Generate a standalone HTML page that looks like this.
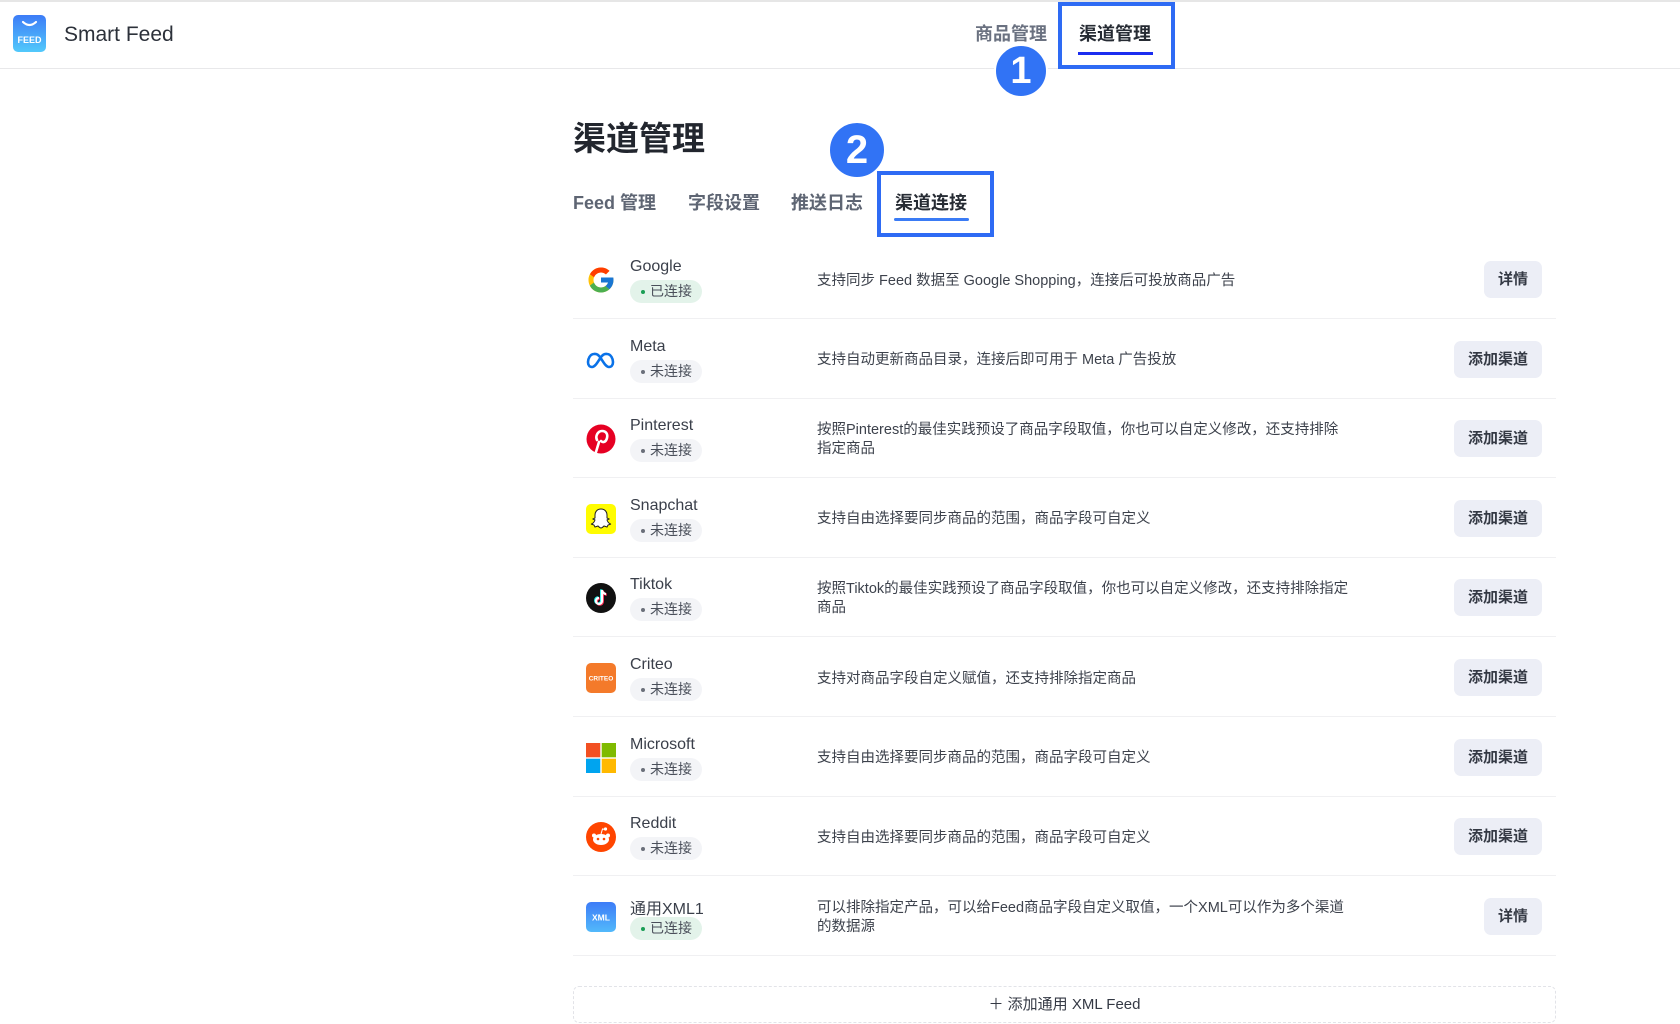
<!DOCTYPE html>
<html><head><meta charset="utf-8"><style>
*{box-sizing:border-box;margin:0;padding:0}
body{width:1680px;height:1024px;overflow:hidden;background:#fff;font-family:"Liberation Sans","Noto Sans CJK SC",sans-serif;color:#262b33;position:relative}
.hdr{position:absolute;left:0;top:0;width:1680px;height:69px;border-top:2px solid #e6e6e6;border-bottom:1px solid #e8e8ea}
.abs{position:absolute}
.row{position:absolute;left:573px;width:983px;height:80px;border-bottom:1px solid #f0f0f2}
.ic{position:absolute;left:13px;top:26px;width:30px;height:30px}
.nm{position:absolute;left:57px;top:19px;font-size:16px;color:#3a3f4a}
.bd{position:absolute;left:57px;top:41px;height:23px;width:72px;border-radius:12px;background:#f3f4f7;color:#4a4f5a;font-size:14px;line-height:23px;padding-left:20px}
.bd:before{content:"";position:absolute;left:11px;top:10px;width:4px;height:4px;border-radius:50%;background:#6a6f7a}
.bd.on{background:#e3f3ea}.bd.on:before{background:#1a9e55}
.ds{position:absolute;left:244px;top:2px;height:80px;width:535px;display:flex;align-items:center;font-size:14.5px;color:#3d424c;line-height:19px}
.bt{position:absolute;right:14px;top:22px;height:37px;padding:0 14px;background:#eceef6;border-radius:7px;font-size:15px;font-weight:bold;color:#343944;line-height:37px}
.circ{position:absolute;border-radius:50%;background:#3173f5;color:#fff;font-weight:bold;text-align:center;border:2px solid #fff}
.tab{position:absolute;top:189px;font-size:18px;font-weight:bold;color:#5e6573}
</style></head><body>
<div class="hdr"></div>
<svg class="abs" style="left:13px;top:15px" width="33" height="37" viewBox="0 0 33 37"><defs><linearGradient id="g" x1="0" y1="0" x2="0" y2="1"><stop offset="0" stop-color="#3d7cf7"/><stop offset="1" stop-color="#52c9fb"/></linearGradient></defs><rect x="0" y="0" width="33" height="37" rx="5" fill="url(#g)"/><path d="M10 7 Q16.5 13 23 7" stroke="#fff" stroke-width="2.2" fill="none" stroke-linecap="round"/><text x="16.5" y="28" font-size="9" font-weight="bold" fill="#fff" text-anchor="middle" font-family="Liberation Sans">FEED</text></svg>
<div class="abs" style="left:64px;top:23px;font-size:21px;color:#2c313a">Smart Feed</div>
<div class="abs" style="left:975px;top:20px;font-size:18px;font-weight:bold;color:#6a7180">商品管理</div>
<div class="abs" style="left:1079px;top:20px;font-size:18px;font-weight:bold;color:#262b33">渠道管理</div>
<div class="abs" style="left:1078px;top:52px;width:75px;height:3px;background:#1b2df0"></div>
<div class="abs" style="left:1058px;top:2px;width:117px;height:67px;border:4px solid #2e6bf4"></div>
<div class="circ" style="left:994px;top:44px;width:54px;height:54px;font-size:38px;line-height:50px">1</div>
<div class="abs" style="left:573px;top:112px;font-size:33px;font-weight:bold;color:#22262e">渠道管理</div>
<div class="circ" style="left:828px;top:121px;width:58px;height:58px;font-size:40px;line-height:54px">2</div>
<div class="tab" style="left:573px">Feed 管理</div>
<div class="tab" style="left:688px">字段设置</div>
<div class="tab" style="left:791px">推送日志</div>
<div class="tab" style="left:895px;color:#262b33">渠道连接</div>
<div class="abs" style="left:894px;top:218px;width:75px;height:3px;background:#3a7bf5;border-radius:2px"></div>
<div class="abs" style="left:877px;top:171px;width:117px;height:66px;border:4px solid #2e6bf4"></div>

<div class="row" style="top:239px"><svg class="ic" viewBox="0 0 48 48"><path fill="#FFC107" d="M43.6 20H24v8h11.3C33.7 32.7 29.2 36 24 36c-6.6 0-12-5.4-12-12s5.4-12 12-12c3 0 5.8 1.1 7.9 3l5.7-5.7C34 6.1 29.3 4 24 4 13 4 4 13 4 24s9 20 20 20 20-9 20-20c0-1.3-.1-2.7-.4-4z"/><path fill="#FF3D00" d="M6.3 14.7l6.6 4.8C14.7 15.1 19 12 24 12c3 0 5.8 1.1 7.9 3l5.7-5.7C34 6.1 29.3 4 24 4 16.3 4 9.700 8.3 6.3 14.7z"/><path fill="#4CAF50" d="M24 44c5.2 0 9.9-2 13.4-5.2l-6.2-5.2C29.2 35.1 26.7 36 24 36c-5.2 0-9.6-3.3-11.3-8l-6.5 5C9.5 39.6 16.2 44 24 44z"/><path fill="#1976D2" d="M43.6 20H24v8h11.3c-.8 2.2-2.2 4.2-4.1 5.6l6.2 5.2C37 39.2 44 34 44 24c0-1.3-.1-2.7-.4-4z"/></svg><div class="nm">Google</div><div class="bd on">已连接</div><div class="ds">支持同步 Feed 数据至 Google Shopping，连接后可投放商品广告</div><div class="bt">详情</div></div>

<div class="row" style="top:318.6px"><svg class="ic" viewBox="0 0 30 30"><path d="M8 9c-4 0-6 5-6 8s1.5 5 4 5c3 0 5-4 9-10 3-4 5-3 6-3 4 0 6 5 6 8s-1.5 5-4 5c-3 0-5-4-9-10-3-4-5-3-6-3z" fill="none" stroke="#0a72e8" stroke-width="2.6"/></svg><div class="nm">Meta</div><div class="bd">未连接</div><div class="ds">支持自动更新商品目录，连接后即可用于 Meta 广告投放</div><div class="bt">添加渠道</div></div>

<div class="row" style="top:398.2px"><svg class="ic" viewBox="0 0 30 30"><circle cx="15" cy="15" r="14.5" fill="#e60023"/><path d="M13 18l-3 10M11 16c-2-4 1-9 5-9s6 3 5 7-4 5-6 3" stroke="#fff" stroke-width="2.6" fill="none" stroke-linecap="round"/></svg><div class="nm">Pinterest</div><div class="bd">未连接</div><div class="ds">按照Pinterest的最佳实践预设了商品字段取值，你也可以自定义修改，还支持排除指定商品</div><div class="bt">添加渠道</div></div>

<div class="row" style="top:477.8px"><svg class="ic" viewBox="0 0 30 30"><rect width="30" height="30" rx="5" fill="#fffc00"/><path d="M15 5c-4 0-6 3-6 6v3l-2 1 2 1c-1 3-3 4-4 4l3 1 1 2 3-1c1 1 2 2 3 2s2-1 3-2l3 1 1-2 3-1c-1 0-3-1-4-4l2-1-2-1v-3c0-3-2-6-6-6z" fill="#fff" stroke="#222" stroke-width="1"/></svg><div class="nm">Snapchat</div><div class="bd">未连接</div><div class="ds">支持自由选择要同步商品的范围，商品字段可自定义</div><div class="bt">添加渠道</div></div>

<div class="row" style="top:557.4px"><svg class="ic" viewBox="0 0 30 30"><circle cx="15" cy="15" r="15" fill="#111"/><path d="M16 7v11a3 3 0 1 1-3-3M16 7c0 2 2 4 4 4" stroke="#25f4ee" stroke-width="2.4" fill="none" transform="translate(-0.8,-0.6)"/><path d="M16 7v11a3 3 0 1 1-3-3M16 7c0 2 2 4 4 4" stroke="#fe2c55" stroke-width="2.4" fill="none" transform="translate(0.8,0.6)"/><path d="M16 7v11a3 3 0 1 1-3-3M16 7c0 2 2 4 4 4" stroke="#fff" stroke-width="2.2" fill="none"/></svg><div class="nm">Tiktok</div><div class="bd">未连接</div><div class="ds">按照Tiktok的最佳实践预设了商品字段取值，你也可以自定义修改，还支持排除指定商品</div><div class="bt">添加渠道</div></div>

<div class="row" style="top:637px"><svg class="ic" viewBox="0 0 30 30"><rect width="30" height="30" rx="5" fill="#f47a2a"/><text x="15" y="17.5" font-size="6.5" font-weight="bold" fill="#fff" text-anchor="middle" font-family="Liberation Sans">CRITEO</text></svg><div class="nm">Criteo</div><div class="bd">未连接</div><div class="ds">支持对商品字段自定义赋值，还支持排除指定商品</div><div class="bt">添加渠道</div></div>

<div class="row" style="top:716.6px"><svg class="ic" viewBox="0 0 30 30"><rect width="14.3" height="14.3" fill="#f25022"/><rect x="15.7" width="14.3" height="14.3" fill="#7fba00"/><rect y="15.7" width="14.3" height="14.3" fill="#00a4ef"/><rect x="15.7" y="15.7" width="14.3" height="14.3" fill="#ffb900"/></svg><div class="nm">Microsoft</div><div class="bd">未连接</div><div class="ds">支持自由选择要同步商品的范围，商品字段可自定义</div><div class="bt">添加渠道</div></div>

<div class="row" style="top:796.2px"><svg class="ic" viewBox="0 0 30 30"><circle cx="15" cy="15" r="15" fill="#ff4500"/><ellipse cx="15" cy="17.5" rx="8" ry="5.5" fill="#fff"/><circle cx="8" cy="13.5" r="2" fill="#fff"/><circle cx="22" cy="13.5" r="2" fill="#fff"/><circle cx="19.5" cy="7" r="1.6" fill="#fff"/><path d="M15 12l1.5-5 3 .5" stroke="#fff" stroke-width="1" fill="none"/><circle cx="12" cy="17" r="1.3" fill="#ff4500"/><circle cx="18" cy="17" r="1.3" fill="#ff4500"/></svg><div class="nm">Reddit</div><div class="bd">未连接</div><div class="ds">支持自由选择要同步商品的范围，商品字段可自定义</div><div class="bt">添加渠道</div></div>

<div class="row" style="top:875.8px"><svg class="ic" viewBox="0 0 30 30"><defs><linearGradient id="x" x1="0" y1="0" x2="0" y2="1"><stop offset="0" stop-color="#3d7cf7"/><stop offset="1" stop-color="#52b9fb"/></linearGradient></defs><rect width="30" height="30" rx="5" fill="url(#x)"/><text x="15" y="18.5" font-size="8.5" font-weight="bold" fill="#fff" text-anchor="middle" font-family="Liberation Sans">XML</text></svg><div class="nm">通用XML1</div><div class="bd on">已连接</div><div class="ds">可以排除指定产品，可以给Feed商品字段自定义取值，一个XML可以作为多个渠道的数据源</div><div class="bt">详情</div></div>

<div class="abs" style="left:573px;top:986px;width:983px;height:37px;border:1px dashed #e2e3e8;border-radius:6px;text-align:center;line-height:35px;font-size:15px;color:#343944">＋ 添加通用 XML Feed</div>
</body></html>
